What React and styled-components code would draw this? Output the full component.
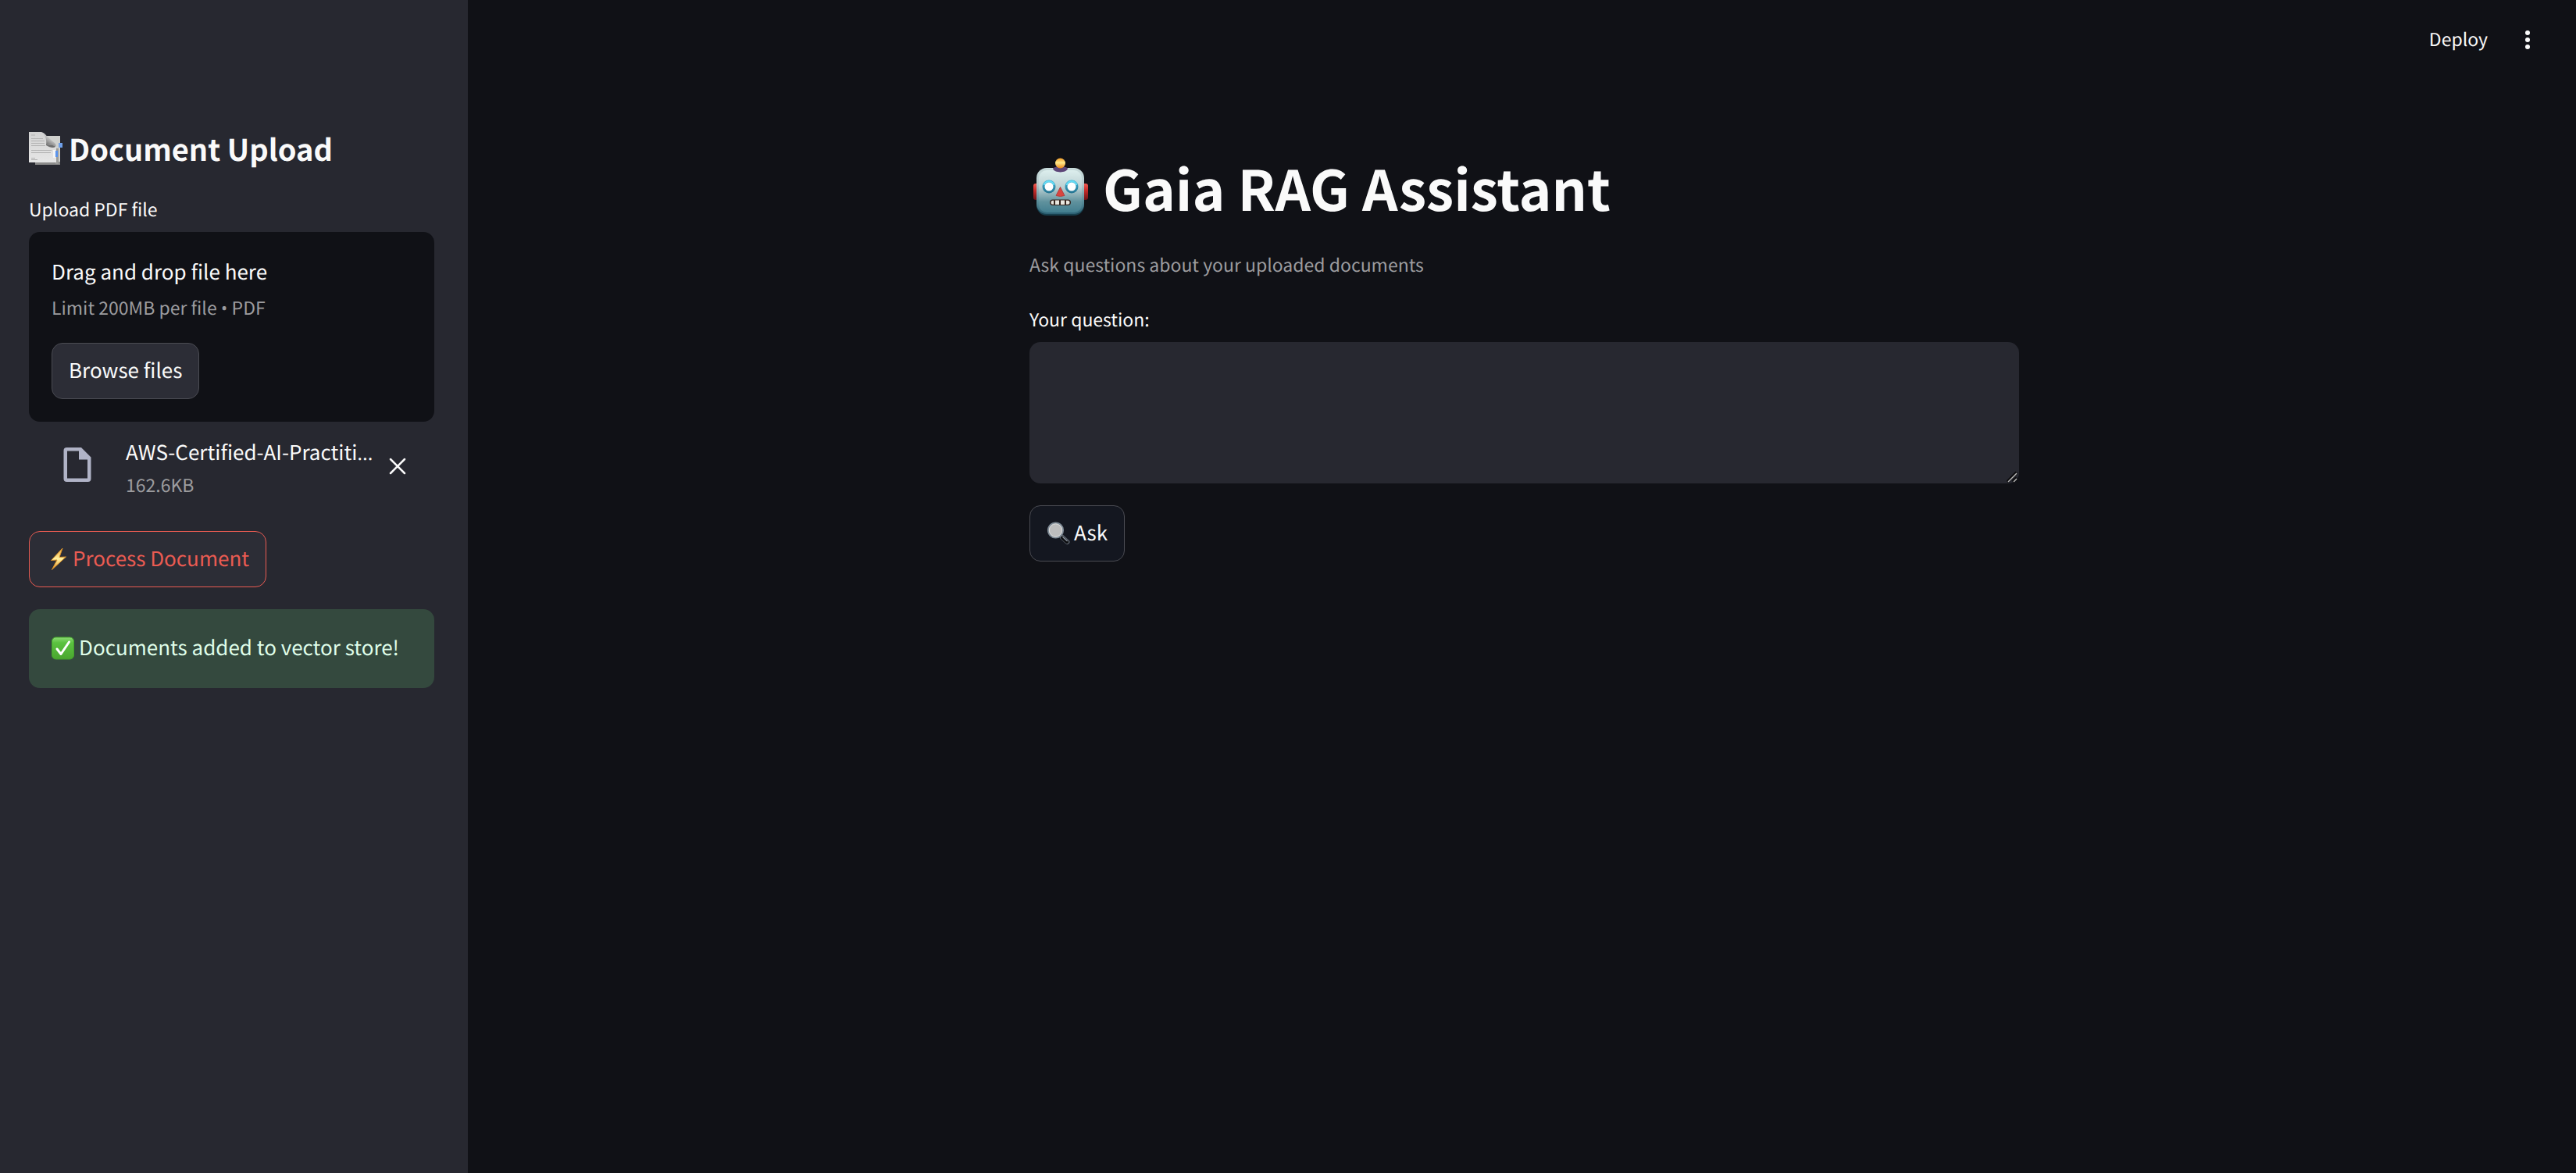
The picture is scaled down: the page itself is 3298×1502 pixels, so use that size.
import React, { useState } from "react";
import styled, { createGlobalStyle } from "styled-components";

const color = {
  page: "#101116",
  panel: "#272830",
  text: "#fafafa",
  muted: "#9c9c9f",
  accent: "#ea5b52",
};

const GlobalStyle = createGlobalStyle`
  *, *::before, *::after { box-sizing: border-box; }
  body {
    margin: 0;
    background: ${color.page};
    color: ${color.text};
    font-family: "Noto Sans CJK SC", "Noto Sans", sans-serif;
    font-size: 26px;
    line-height: 46px;
    text-rendering: geometricPrecision;
  }
  button, textarea { font: inherit; color: inherit; text-rendering: inherit; }
  h1, h2, p { margin: 0; }
`;

const Layout = styled.div`
  display: flex;
  min-height: 100vh;
`;

const Sidebar = styled.aside`
  flex: 0 0 599px;
  min-width: 0;
  background: ${color.panel};
  padding: 164px 43px 40px 37px;
  display: flex;
  flex-direction: column;
  align-items: flex-start;
`;

const SidebarTitle = styled.h2`
  display: flex;
  align-items: center;
  gap: 8px;
  font-size: 38px;
  font-weight: 600;
  line-height: 52px;
  margin-bottom: 31px;
`;

const FieldLabel = styled.label`
  display: block;
  font-size: 23px;
  line-height: 40px;
  margin-bottom: 10px;
`;

const Dropzone = styled.section`
  width: 100%;
  padding: 28px 29px 29px;
  border-radius: 14px;
  background: ${color.page};
  display: flex;
  flex-direction: column;
  align-items: flex-start;
`;

const DropHint = styled.p`
  margin-bottom: 2px;
`;

const Small = styled.p`
  font-size: 23px;
  line-height: 40px;
  color: ${color.muted};
`;

const Mark = styled.span`
  font-family: "Open Sans", sans-serif;
  line-height: 1;
`;

const HiddenInput = styled.input`
  display: none;
`;

const Button = styled.button`
  display: inline-flex;
  align-items: center;
  gap: ${(p) => p.$gap || 0}px;
  height: 72px;
  padding: 0 21px 3px;
  border: 1px solid ${(p) => (p.$accent ? color.accent : "#4a4b52")};
  border-radius: 14px;
  background: ${(p) => (p.$onPanel ? "#2c2d36" : "#141720")};
  color: ${(p) => (p.$accent ? color.accent : color.text)};
  cursor: pointer;
  margin-top: ${(p) => p.$top || 0}px;

  svg { margin-top: 2px; }
`;

const FileRow = styled.div`
  width: 100%;
  display: flex;
  align-items: center;
  padding: 14px 29px 0 37px;
`;

const FileInfo = styled.div`
  flex: 1;
  min-width: 0;
  margin-left: 37px;
  padding-top: 4px;
`;

const FileName = styled.p`
  line-height: 42px;
  white-space: nowrap;
`;

const IconButton = styled.button`
  display: flex;
  align-items: center;
  justify-content: center;
  padding: ${(p) => p.$pad || 0}px;
  border: 0;
  background: none;
  cursor: pointer;
`;

const Alert = styled.div`
  width: 100%;
  margin-top: 28px;
  padding: 26px 29px 29px;
  border-radius: 14px;
  background: #34493e;
  color: #dffde9;
  display: flex;
  align-items: center;
  gap: 6px;

  svg { margin-top: 2px; }
`;

const Main = styled.main`
  flex: 1;
  min-width: 0;
  display: flex;
  flex-direction: column;
`;

const Header = styled.header`
  display: flex;
  justify-content: flex-end;
  align-items: center;
  gap: 34px;
  height: 102px;
  padding-right: 45px;
`;

const DeployButton = styled.button`
  padding: 0 0 4px;
  border: 0;
  background: none;
  font-size: 23px;
  cursor: pointer;
`;

const Content = styled.div`
  width: 100%;
  max-width: 1273px;
  margin: 0 auto;
  padding: 90px 0 40px 6px;
`;

const Title = styled.h1`
  display: flex;
  align-items: center;
  gap: 17px;
  font-size: 71px;
  font-weight: 700;
  line-height: 96px;
  margin-bottom: 30px;
`;

const Caption = styled(Small)`
  margin-bottom: 30px;
`;

const TextAreaWrap = styled.div`
  position: relative;
`;

const TextArea = styled.textarea`
  display: block;
  width: 100%;
  height: 181px;
  padding: 22px;
  border: 0;
  border-radius: 14px;
  outline: none;
  background: ${color.panel};
  resize: none;
`;

const Grip = styled.svg`
  position: absolute;
  right: 2px;
  bottom: 1px;
  pointer-events: none;
`;

function PagesIcon() {
  return (
    <svg width="43" height="44" viewBox="0 0 43 44" aria-hidden="true">
      <defs>
        <linearGradient id="pg" x1="0" y1="0" x2="0" y2="1">
          <stop offset="0" stopColor="#d2d2d2" />
          <stop offset="1" stopColor="#e6e6e6" />
        </linearGradient>
        <linearGradient id="pc" x1="0.8" y1="0" x2="0.2" y2="1">
          <stop offset="0" stopColor="#f2f2f2" />
          <stop offset="0.5" stopColor="#b5b5b5" />
          <stop offset="1" stopColor="#4c4c4c" />
        </linearGradient>
      </defs>
      <path d="M8 6H40V43H8z" fill="#cfd0cd" />
      <path d="M8 39H40V43H8z" fill="#8b8b8a" />
      <path d="M34 22h4v20h-4z" fill="#9c9c9a" />
      <rect x="38" y="15" width="5" height="6" fill="#6fa0ea" />
      <path d="M0 1H16C22 3 24 8 22 13C27 12 33 14 35 20V40H0z" fill="url(#pg)" />
      <path d="M16 1C21 3 26 10 33 15C35 17 35 19 34 20C31 17 26 18 22 18C23 11 21 4 16 1z" fill="url(#pc)" />
      <g stroke="#b2b2b2" strokeWidth="1">
        <path d="M3 5h5M3 9.500h15M3 12.500h17M3 15.500h17M3 18.500h18M3 24.500h26M3 27.500h25M3 34.500h5M3 36.500h8" />
      </g>
      <path d="M22 18C27 18 31 17 34 20C31 22 27 21 22 18z" fill="#6d6d6d" />
      <rect x="31" y="24" width="3" height="10" fill="#f4f4f4" />
      <rect x="34" y="25" width="3" height="8" fill="#5a93ec" />
    </svg>
  );
}

function RobotIcon() {
  return (
    <svg width="77" height="76" viewBox="0 0 77 76" aria-hidden="true">
      <defs>
        <linearGradient id="rh" x1="0" y1="0" x2="0" y2="1">
          <stop offset="0" stopColor="#c9dcdc" />
          <stop offset="0.35" stopColor="#b5cacc" />
          <stop offset="0.7" stopColor="#5e919d" />
          <stop offset="1" stopColor="#2d6275" />
        </linearGradient>
        <linearGradient id="rf" x1="0" y1="0" x2="0" y2="1">
          <stop offset="0" stopColor="#dceeed" />
          <stop offset="0.4" stopColor="#bcd1d3" />
          <stop offset="0.75" stopColor="#5f919d" />
          <stop offset="1" stopColor="#427e8f" />
        </linearGradient>
        <linearGradient id="rb" x1="0" y1="0" x2="0" y2="1">
          <stop offset="0" stopColor="#f39b25" />
          <stop offset="0.45" stopColor="#ffe98a" />
          <stop offset="1" stopColor="#e98417" />
        </linearGradient>
        <linearGradient id="re" x1="0" y1="0" x2="0" y2="1">
          <stop offset="0" stopColor="#ef5a50" />
          <stop offset="0.4" stopColor="#c92d2a" />
          <stop offset="1" stopColor="#6d1216" />
        </linearGradient>
        <linearGradient id="ry" x1="0" y1="0" x2="0" y2="1">
          <stop offset="0" stopColor="#43b5d8" />
          <stop offset="1" stopColor="#23728f" />
        </linearGradient>
      </defs>
      <rect x="5" y="33" width="8" height="21" rx="3" fill="url(#re)" />
      <rect x="67" y="33" width="8" height="21" rx="3" fill="url(#re)" />
      <rect x="9" y="15" width="61" height="59" rx="13" fill="#173f4d" />
      <rect x="9" y="13" width="61" height="59" rx="13" fill="url(#rh)" />
      <rect x="12" y="16" width="55" height="54" rx="10" fill="url(#rf)" />
      <path d="M30 13.500C33 10 46 10 49 13.500C48 20 31 20 30 13.500z" fill="#5c4577" />
      <circle cx="39.500" cy="7" r="6.500" fill="url(#rb)" />
      <g>
        <circle cx="25" cy="37" r="8.500" fill="url(#ry)" />
        <circle cx="54" cy="37" r="8.500" fill="url(#ry)" />
        <path d="M18.500 35a6.800 6.800 0 0 1 13 0M47.500 35a6.800 6.800 0 0 1 13 0" fill="none" stroke="#65dcf5" strokeWidth="2" />
        <circle cx="25" cy="37" r="5.500" fill="#fff" />
        <circle cx="54" cy="37" r="5.500" fill="#fff" />
      </g>
      <path d="M39.500 37.500L45 48.500Q39.500 50.500 34 48.500z" fill="#d8453f" stroke="#a9383a" strokeWidth="0.800" />
      <rect x="26" y="53.500" width="27" height="7.500" rx="3.700" fill="#35251f" />
      <path d="M27.500 57.300q0-2.500 2.500-2.500h1v5h-1q-2.500 0-2.500-2.500zM33 54.500h5v5.500h-5zM40 54.500h5v5.500h-5zM47 54.800h2q2.500 0 2.500 2.500t-2.500 2.500h-2z" fill="#e9e7df" />
    </svg>
  );
}

function BoltIcon() {
  return (
    <svg width="28" height="30" viewBox="0 0 28 30" aria-hidden="true">
      <defs>
        <linearGradient id="bolt" x1="0" y1="0" x2="0" y2="1">
          <stop offset="0" stopColor="#f0a73a" />
          <stop offset="0.5" stopColor="#fff2a0" />
          <stop offset="1" stopColor="#e99326" />
        </linearGradient>
      </defs>
      <path d="M21 1L6.500 16.500L14 16L7.500 28.500L25.500 12L17 12.500z" fill="url(#bolt)" stroke="#d99028" strokeWidth="1" strokeLinejoin="round" />
    </svg>
  );
}

function CheckIcon() {
  return (
    <svg width="29" height="30" viewBox="0 0 29 30" aria-hidden="true">
      <defs>
        <linearGradient id="chk" x1="0" y1="0" x2="0" y2="1">
          <stop offset="0" stopColor="#8ddb74" />
          <stop offset="0.25" stopColor="#5bc240" />
          <stop offset="1" stopColor="#4aa62f" />
        </linearGradient>
      </defs>
      <rect x="0.500" y="1" width="28" height="28" rx="5" fill="url(#chk)" stroke="#44a32c" strokeWidth="1" />
      <path d="M7 16L12 22.500L22.500 7" fill="none" stroke="#fff" strokeWidth="3" strokeLinecap="round" strokeLinejoin="round" />
    </svg>
  );
}

function SearchIcon() {
  return (
    <svg width="30" height="30" viewBox="0 0 30 30" aria-hidden="true">
      <path d="M19.500 19.500L26.500 26" stroke="#5a616a" strokeWidth="6" strokeLinecap="round" />
      <path d="M20 20.500L26 26" stroke="#0b0c0f" strokeWidth="4" strokeLinecap="round" />
      <path d="M20.500 19.500L26.500 25" stroke="#949da8" strokeWidth="1.200" />
      <circle cx="11.500" cy="11" r="9.600" fill="#bdbdbd" stroke="#7f8b96" strokeWidth="2" />
      <circle cx="11.500" cy="11" r="8.200" fill="none" stroke="#dedede" strokeWidth="1" />
    </svg>
  );
}

function FileIcon() {
  return (
    <svg width="50" height="48" viewBox="0 0 50 48" aria-hidden="true">
      <path
        fillRule="evenodd"
        fill="#b0b3c6"
        d="M11.500 0H30L42.500 12.500V40Q42.500 44 38.500 44H11.500Q7.500 44 7.500 40V4Q7.500 0 11.500 0zM12 4.500V39.500H38V15.500H27V4.500z"
      />
    </svg>
  );
}

export default function App() {
  const [question, setQuestion] = useState("");
  return (
    <>
      <GlobalStyle />
      <Layout>
        <Sidebar>
          <SidebarTitle>
            <PagesIcon />
            Document Upload
          </SidebarTitle>
          <FieldLabel htmlFor="pdf">Upload PDF file</FieldLabel>
          <Dropzone>
            <DropHint>Drag and drop file here</DropHint>
            <Small>
              Limit 200MB per file <Mark>•</Mark> PDF
            </Small>
            <HiddenInput id="pdf" type="file" accept="application/pdf" />
            <Button type="button" $onPanel $top={26}>
              Browse files
            </Button>
          </Dropzone>
          <FileRow>
            <FileIcon />
            <FileInfo>
              <FileName>
                AWS-Certified-AI-Practiti<Mark>…</Mark>
              </FileName>
              <Small>162.6KB</Small>
            </FileInfo>
            <IconButton type="button" aria-label="Remove file" $pad={7}>
              <svg width="22" height="22" viewBox="0 0 22 22" aria-hidden="true">
                <path d="M2 2L20 20M20 2L2 20" stroke="#fafafa" strokeWidth="2.500" strokeLinecap="round" />
              </svg>
            </IconButton>
          </FileRow>
          <Button type="button" $onPanel $accent $gap={6} $top={40}>
            <BoltIcon />
            Process Document
          </Button>
          <Alert role="alert">
            <CheckIcon />
            Documents added to vector store!
          </Alert>
        </Sidebar>
        <Main>
          <Header>
            <DeployButton type="button">Deploy</DeployButton>
            <IconButton type="button" aria-label="Main menu">
              <svg width="34" height="34" viewBox="0 0 34 34" aria-hidden="true" fill="#fafafa">
                <circle cx="17" cy="8" r="3" />
                <circle cx="17" cy="17" r="3" />
                <circle cx="17" cy="26" r="3" />
              </svg>
            </IconButton>
          </Header>
          <Content>
            <Title>
              <RobotIcon />
              Gaia RAG Assistant
            </Title>
            <Caption>Ask questions about your uploaded documents</Caption>
            <FieldLabel htmlFor="question">Your question:</FieldLabel>
            <TextAreaWrap>
              <TextArea id="question" value={question} onChange={(e) => setQuestion(e.target.value)} />
              <Grip width="14" height="15" viewBox="0 0 14 15" aria-hidden="true">
                <path d="M1 14L13 2M8 14L13 9" stroke="#0c0c0e" strokeWidth="4" />
                <path d="M2 14L13 3M9 14L13 10" stroke="#b9b9b9" strokeWidth="1.500" />
              </Grip>
            </TextAreaWrap>
            <Button type="button" $gap={5} $top={28}>
              <SearchIcon />
              Ask
            </Button>
          </Content>
        </Main>
      </Layout>
    </>
  );
}
